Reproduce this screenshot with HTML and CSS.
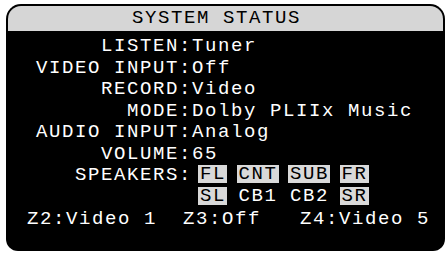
FILE: index.html
```html
<!DOCTYPE html>
<html>
<head>
<meta charset="utf-8">
<link rel="stylesheet" href="styles.css">
</head>
<body>
<div class="screen">
  <div class="header">SYSTEM STATUS</div>
  <div class="rows">
    <div class="row"><span class="label">LISTEN:</span><span class="value">Tuner</span></div>
    <div class="row"><span class="label">VIDEO INPUT:</span><span class="value">Off</span></div>
    <div class="row"><span class="label">RECORD:</span><span class="value">Video</span></div>
    <div class="row"><span class="label">MODE:</span><span class="value">Dolby PLIIx Music</span></div>
    <div class="row"><span class="label">AUDIO INPUT:</span><span class="value">Analog</span></div>
    <div class="row"><span class="label">VOLUME:</span><span class="value">65</span></div>
    <div class="row speakers-row">
      <span class="label">SPEAKERS:</span>
      <div class="speakers">
        <span class="spk on">FL</span>
        <span class="spk on">CNT</span>
        <span class="spk on">SUB</span>
        <span class="spk on">FR</span>
        <span class="spk on">SL</span>
        <span class="spk">CB1</span>
        <span class="spk">CB2</span>
        <span class="spk on">SR</span>
      </div>
    </div>
  </div>
  <div class="zones">Z2:Video 1  Z3:Off   Z4:Video 5</div>
</div>
</body>
</html>
```

FILE: styles.css
```css
html, body {
  margin: 0;
  padding: 0;
  background: #ffffff;
}

body {
  padding: 4px 1px 2px 6px;
}

.screen {
  width: 439px;
  height: 247px;
  background: #000000;
  border-radius: 15px 15px 12px 12px;
  padding: 2px 2px 0 2px;
  box-sizing: border-box;
  color: #ffffff;
  font-family: "Liberation Mono", "DejaVu Sans Mono", monospace;
  font-size: 19px;
  letter-spacing: 1.6px;
}

.header {
  height: 25px;
  background: #d6d6d6;
  color: #000000;
  border-radius: 13px 13px 0 0;
  line-height: 25px;
  text-align: center;
  padding-right: 18px;
  white-space: pre;
}

.rows {
  padding-top: 5px;
  display: flex;
  flex-direction: column;
}

.row {
  display: flex;
  line-height: 21.5px;
  height: 21.5px;
}

.label {
  width: 184px;
  text-align: right;
  white-space: pre;
}

.value {
  white-space: pre;
}

.speakers-row {
  height: 44px;
}

.speakers {
  display: grid;
  grid-template-columns: auto auto auto auto;
  column-gap: 9.5px;
  row-gap: 4px;
  margin-left: 6px;
  align-content: start;
  justify-content: start;
}

.spk {
  display: block;
  height: 18px;
  line-height: 18px;
  padding: 0 1px 0 2px;
  color: #ffffff;
}

.spk.on {
  background: #d9d9d9;
  color: #000000;
}

.zones {
  padding-left: 19px;
  line-height: 21.5px;
  white-space: pre;
}
```
